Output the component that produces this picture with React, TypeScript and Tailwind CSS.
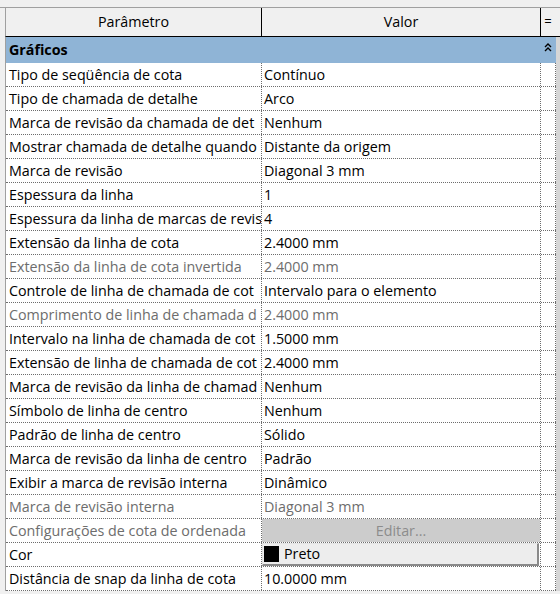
import React from "react";

type Row = { p: string; v: string; dis?: boolean; kind?: "edit" | "color" };

const rows: Row[] = [
  { p: "Tipo de seqüência de cota", v: "Contínuo" },
  { p: "Tipo de chamada de detalhe", v: "Arco" },
  { p: "Marca de revisão da chamada de det", v: "Nenhum" },
  { p: "Mostrar chamada de detalhe quando", v: "Distante da origem" },
  { p: "Marca de revisão", v: "Diagonal 3 mm" },
  { p: "Espessura da linha", v: "1" },
  { p: "Espessura da linha de marcas de revis", v: "4" },
  { p: "Extensão da linha de cota", v: "2.4000 mm" },
  { p: "Extensão da linha de cota invertida", v: "2.4000 mm", dis: true },
  { p: "Controle de linha de chamada de cot", v: "Intervalo para o elemento" },
  { p: "Comprimento de linha de chamada d", v: "2.4000 mm", dis: true },
  { p: "Intervalo na linha de chamada de cot", v: "1.5000 mm" },
  { p: "Extensão de linha de chamada de cot", v: "2.4000 mm" },
  { p: "Marca de revisão da linha de chamad", v: "Nenhum" },
  { p: "Símbolo de linha de centro", v: "Nenhum" },
  { p: "Padrão de linha de centro", v: "Sólido" },
  { p: "Marca de revisão da linha de centro", v: "Padrão" },
  { p: "Exibir a marca de revisão interna", v: "Dinâmico" },
  { p: "Marca de revisão interna", v: "Diagonal 3 mm", dis: true },
  { p: "Configurações de cota de ordenada", v: "Editar...", dis: true, kind: "edit" },
  { p: "Cor", v: "Preto", kind: "color" },
  { p: "Distância de snap da linha de cota", v: "10.0000 mm" },
];

function ValueCell({ r }: { r: Row }) {
  if (r.kind === "edit") {
    return (
      <div className="w-[279px] shrink-0 border-r border-dotted border-[#6d6d6d] h-full">
        <div className="h-full w-[278px] bg-[#cccccc] flex items-center justify-center text-[#8c8c8c]">
          {r.v}
        </div>
      </div>
    );
  }
  if (r.kind === "color") {
    return (
      <div className="w-[279px] shrink-0 border-r border-dotted border-[#6d6d6d] h-full">
        <div className="h-full w-[277px] bg-[#ededed] border-t border-l border-[#e3e3e3] border-r-2 border-b-2 border-r-[#8a8a8a] border-b-[#8a8a8a] flex items-center pl-[1px]">
          <div className="w-[15px] h-[16px] bg-black shrink-0" />
          <span className="ml-[5px]">{r.v}</span>
        </div>
      </div>
    );
  }
  return (
    <div
      className={
        "w-[279px] shrink-0 border-r border-dotted border-[#6d6d6d] h-full flex items-center pl-[2px] overflow-hidden whitespace-nowrap " +
        (r.dis ? "text-[#6d6d6d]" : "text-black")
      }
    >
      {r.v}
    </div>
  );
}

export default function App() {
  return (
    <div
      className="w-[560px] h-[594px] bg-[#f0f0f0] pt-[7px] overflow-hidden text-[14.3px] text-black"
      style={{ fontFamily: '"Open Sans", "Noto Sans", sans-serif' }}
    >
      <div className="border-t border-[#a0a0a0] flex flex-col">
        <div className="flex h-[29px] border-b border-black ml-[5px] border-l border-l-[#a0a0a0]">
          <div className="w-[256px] shrink-0 border-r border-black flex items-center justify-center">
            Parâmetro
          </div>
          <div className="w-[279px] shrink-0 border-r border-black flex items-center justify-center">
            Valor
          </div>
          <div className="w-[14px] shrink-0 flex items-center justify-center text-[13px]">=</div>
        </div>
        <div className="flex ml-[5px] border-l border-[#a0a0a0]">
          <div className="w-[550px] shrink-0 flex flex-col bg-white">
            <div className="h-[26px] bg-[#8fb4d6] flex items-center justify-between pl-[3px] pr-[4px]">
              <span className="font-bold">Gráficos</span>
              <svg width="8" height="10" viewBox="0 0 8 10" className="mt-[-6px]">
                <path d="M1 5 L4 2 L7 5" stroke="black" strokeWidth="1.4" fill="none" />
                <path d="M1 9 L4 6 L7 9" stroke="black" strokeWidth="1.4" fill="none" />
              </svg>
            </div>
            {rows.map((r, i) => (
              <div key={i} className="flex h-[24px] border-b border-dotted border-[#6d6d6d]">
                <div
                  className={
                    "w-[256px] shrink-0 border-r border-dotted border-[#6d6d6d] flex items-center pl-[3px] overflow-hidden whitespace-nowrap " +
                    (r.dis ? "text-[#6d6d6d]" : "text-black")
                  }
                >
                  {r.p}
                </div>
                <ValueCell r={r} />
                <div className="w-[15px] shrink-0 border-r border-dotted border-[#6d6d6d]" />
              </div>
            ))}
          </div>
          <div className="w-[4px] shrink-0 bg-[#d6d6d6]" />
        </div>
      </div>
    </div>
  );
}
